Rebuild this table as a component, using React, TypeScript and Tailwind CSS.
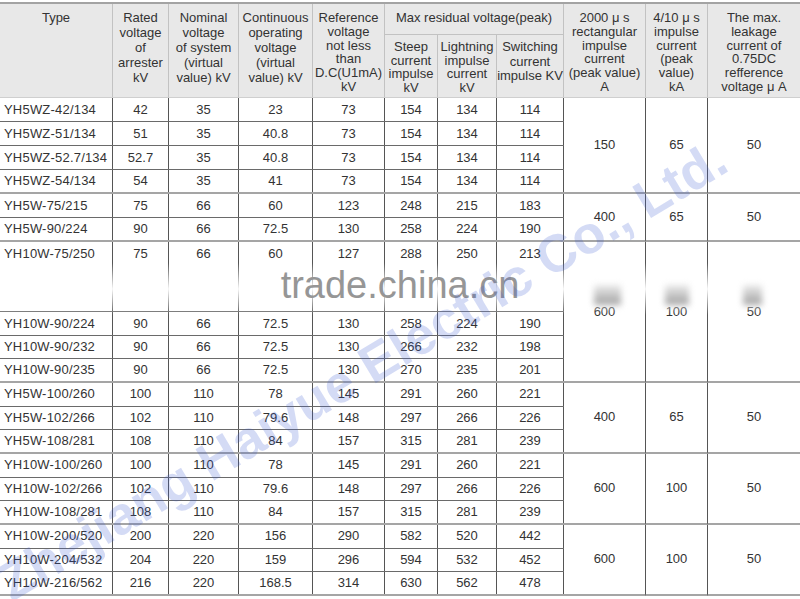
const ROWCOLS = "grid grid-cols-[113px_56px_70px_74px_72px_53px_59px_67px]";

type Group = { rows: (string[] | null)[]; right: [string, string, string]; tall?: boolean };

const groups: Group[] = [
  {
    tall: true,
    right: ["150", "65", "50"],
    rows: [
      ["YH5WZ-42/134", "42", "35", "23", "73", "154", "134", "114"],
      ["YH5WZ-51/134", "51", "35", "40.8", "73", "154", "134", "114"],
      ["YH5WZ-52.7/134", "52.7", "35", "40.8", "73", "154", "134", "114"],
      ["YH5WZ-54/134", "54", "35", "41", "73", "154", "134", "114"],
    ],
  },
  {
    tall: true,
    right: ["400", "65", "50"],
    rows: [
      ["YH5W-75/215", "75", "66", "60", "123", "248", "215", "183"],
      ["YH5W-90/224", "90", "66", "72.5", "130", "258", "224", "190"],
    ],
  },
  {
    right: ["600", "100", "50"],
    rows: [
      ["YH10W-75/250", "75", "66", "60", "127", "288", "250", "213"],
      null,
      ["YH10W-90/224", "90", "66", "72.5", "130", "258", "224", "190"],
      ["YH10W-90/232", "90", "66", "72.5", "130", "266", "232", "198"],
      ["YH10W-90/235", "90", "66", "72.5", "130", "270", "235", "201"],
    ],
  },
  {
    right: ["400", "65", "50"],
    rows: [
      ["YH5W-100/260", "100", "110", "78", "145", "291", "260", "221"],
      ["YH5W-102/266", "102", "110", "79.6", "148", "297", "266", "226"],
      ["YH5W-108/281", "108", "110", "84", "157", "315", "281", "239"],
    ],
  },
  {
    right: ["600", "100", "50"],
    rows: [
      ["YH10W-100/260", "100", "110", "78", "145", "291", "260", "221"],
      ["YH10W-102/266", "102", "110", "79.6", "148", "297", "266", "226"],
      ["YH10W-108/281", "108", "110", "84", "157", "315", "281", "239"],
    ],
  },
  {
    right: ["600", "100", "50"],
    rows: [
      ["YH10W-200/520", "200", "220", "156", "290", "582", "520", "442"],
      ["YH10W-204/532", "204", "220", "159", "296", "594", "532", "452"],
      ["YH10W-216/562", "216", "220", "168.5", "314", "630", "562", "478"],
    ],
  },
];

function HCell({ w, lines, pad, lead, last }: { w: string; lines: string[]; pad: string; lead: string; last?: boolean }) {
  return (
    <div className={`${w} ${pad} ${lead} text-center whitespace-nowrap ${last ? "" : "border-r border-[#c2c2c2]"}`}>
      {lines.map((l) => (
        <div key={l}>{l}</div>
      ))}
    </div>
  );
}

function Header() {
  return (
    <div className="flex h-[96px] border-t-2 border-b border-t-[#a3a3a3] border-b-[#cfcfcf] bg-[#e8e8e8]">
      <HCell w="w-[113px]" pad="pt-[7px]" lead="leading-[14px]" lines={["Type"]} />
      <HCell w="w-[56px]" pad="pt-[6px]" lead="leading-[15px]" lines={["Rated", "voltage", "of", "arrester", "kV"]} />
      <HCell w="w-[70px]" pad="pt-[6px]" lead="leading-[15px]" lines={["Nominal", "voltage", "of system", "(virtual", "value) kV"]} />
      <HCell w="w-[74px]" pad="pt-[6px]" lead="leading-[15px]" lines={["Continuous", "operating", "voltage", "(virtual", "value) kV"]} />
      <HCell w="w-[72px]" pad="pt-[7px]" lead="leading-[13.8px]" lines={["Reference", "voltage", "not less", "than", "D.C(U1mA)", "kV"]} />
      <div className="flex w-[179px] flex-col">
        <div className="h-[31px] border-r border-b border-[#c2c2c2] pt-[7px] text-center leading-[14px]">
          Max residual voltage(peak)
        </div>
        <div className="flex flex-1">
          <HCell w="w-[53px]" pad="pt-[5px]" lead="leading-[13.5px]" lines={["Steep", "current", "impulse", "kV"]} />
          <HCell w="w-[59px]" pad="pt-[5px]" lead="leading-[13.5px]" lines={["Lightning", "impulse", "current", "kV"]} />
          <HCell w="w-[67px]" pad="pt-[5px]" lead="leading-[14.5px]" lines={["Switching", "current", "impulse KV"]} />
        </div>
      </div>
      <HCell w="w-[82px]" pad="pt-[7px]" lead="leading-[13.8px]" lines={["2000 μ s", "rectangular", "impulse", "current", "(peak value)", "A"]} />
      <HCell w="w-[62px]" pad="pt-[7px]" lead="leading-[13.8px]" lines={["4/10 μ s", "impulse", "current", "(peak", "value)", "kA"]} />
      <HCell w="w-[92px]" pad="pt-[7px]" lead="leading-[13.8px]" lines={["The max.", "leakage", "current of", "0.75DC", "refference", "voltage  μ A"]} last />
    </div>
  );
}

function DataRow({ cells, h, line }: { cells: string[]; h: string; line: string }) {
  return (
    <div className={`${ROWCOLS} ${h} ${line}`}>
      {cells.map((c, i) => (
        <div
          key={i}
          className={`flex items-center border-r border-r-[#555] ${i === 0 ? "justify-start pl-[4px] tracking-[0.2px]" : "justify-center"}`}
        >
          {c}
        </div>
      ))}
    </div>
  );
}

function GroupBlock({ g }: { g: Group }) {
  return (
    <div className="flex">
      <div className="flex w-[564px] flex-col">
        {g.rows.map((r, i) => {
          const last = i === g.rows.length - 1;
          const beforeBand = g.rows[i + 1] === null;
          const line = last
            ? "border-b-2 border-b-[#a5a5a5]"
            : beforeBand
              ? ""
              : "border-b border-b-[#6a6a6a]";
          if (r === null) {
            return <DataRow key={i} cells={["", "", "", "", "", "", "", ""]} h="h-[46px]" line={line} />;
          }
          const h = g.tall || i === 0 ? "h-[24px]" : "h-[23.5px]";
          return <DataRow key={i} cells={r} h={h} line={line} />;
        })}
      </div>
      <div className="flex w-[82px] items-center justify-center border-r border-b-2 border-r-[#555] border-b-[#a5a5a5]">{g.right[0]}</div>
      <div className="flex w-[62px] items-center justify-center border-r border-b-2 border-r-[#555] border-b-[#a5a5a5]">{g.right[1]}</div>
      <div className="flex w-[92px] items-center justify-center border-b-2 border-b-[#a5a5a5]">{g.right[2]}</div>
    </div>
  );
}

export default function App() {
  return (
    <div className="relative h-[599px] w-[800px] overflow-hidden bg-white pt-[2px] font-['Liberation_Sans',Arial,sans-serif] text-[13px] text-[#333]">
      <Header />
      {groups.map((g, i) => (
        <GroupBlock key={i} g={g} />
      ))}

      {/* blurred band over the table */}
      <div className="pointer-events-none absolute top-[263px] left-0 h-[52px] w-[800px] bg-linear-to-b from-white/0 via-white/95 to-white/0" />
      <div className="pointer-events-none absolute top-[285px] left-[594px] h-[20px] w-[27px] bg-linear-to-b from-[#ececec] to-[#a2a2a2] blur-[3px]" />
      <div className="pointer-events-none absolute top-[285px] left-[665px] h-[20px] w-[24px] bg-linear-to-b from-[#ececec] to-[#a2a2a2] blur-[3px]" />
      <div className="pointer-events-none absolute top-[285px] left-[743px] h-[20px] w-[19px] bg-linear-to-b from-[#ececec] to-[#a2a2a2] blur-[3px]" />
      <div className="pointer-events-none absolute top-[266px] left-0 w-[800px] text-center text-[38px] leading-[38px] text-[#969696]">
        trade.china.cn
      </div>

      {/* company watermark */}
      <div className="pointer-events-none absolute top-[370px] left-[362px] -translate-x-1/2 -translate-y-1/2 rotate-[-31deg] whitespace-nowrap text-[53px] font-bold leading-none text-[#3d5bd0]/[0.22]">
        Zhejiang Haiyue Electric Co., Ltd.
      </div>
    </div>
  );
}
